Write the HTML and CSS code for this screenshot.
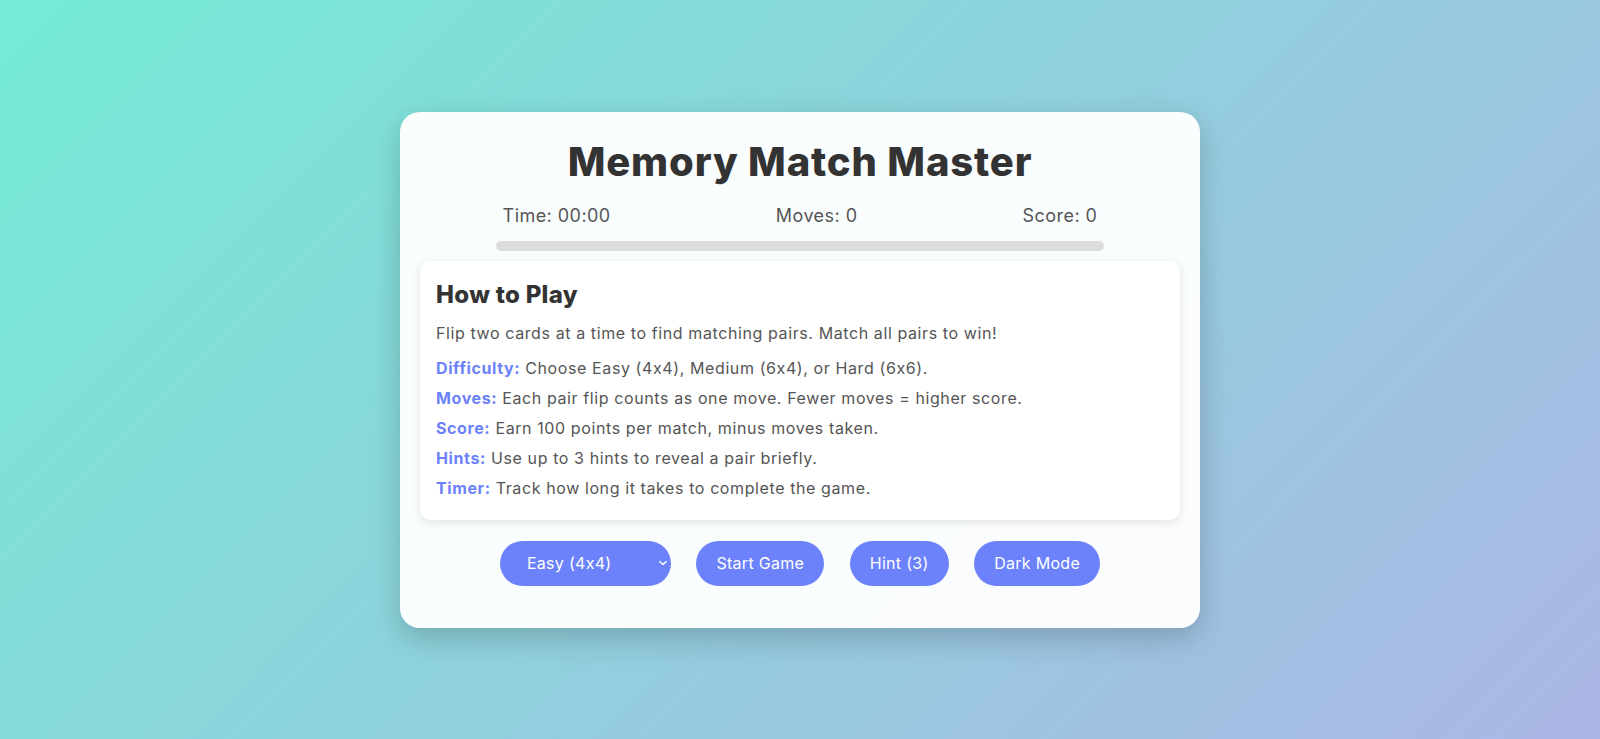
FILE: index.html
```html
<!DOCTYPE html>
<html lang="en">
<head>
<meta charset="utf-8">
<title>Memory Match Master</title>
<link rel="stylesheet" href="styles.css">
</head>
<body>
<main class="game">
  <h1 class="title">Memory Match Master</h1>
  <div class="stats">
    <span>Time: 00:00</span>
    <span>Moves: 0</span>
    <span>Score: 0</span>
  </div>
  <div class="progress"><div class="progress-fill"></div></div>
  <section class="rules">
    <h2>How to Play</h2>
    <p>Flip two cards at a time to find matching pairs. Match all pairs to win!</p>
    <ul>
      <li><strong>Difficulty:</strong> Choose Easy (4x4), Medium (6x4), or Hard (6x6).</li>
      <li><strong>Moves:</strong> Each pair flip counts as one move. Fewer moves = higher score.</li>
      <li><strong>Score:</strong> Earn 100 points per match, minus moves taken.</li>
      <li><strong>Hints:</strong> Use up to 3 hints to reveal a pair briefly.</li>
      <li><strong>Timer:</strong> Track how long it takes to complete the game.</li>
    </ul>
  </section>
  <div class="controls">
    <div class="select">
      <span>Easy (4x4)</span>
      <svg class="chev" viewBox="0 0 10 6" width="8" height="6"><path d="M1 1l4 4 4-4" fill="none" stroke="#fff" stroke-width="1.7" stroke-linecap="round" stroke-linejoin="round"/></svg>
    </div>
    <button class="btn">Start Game</button>
    <button class="btn">Hint (3)</button>
    <button class="btn">Dark Mode</button>
  </div>
</main>
</body>
</html>
```

FILE: styles.css
```css
* { box-sizing: border-box; }
body {
  margin: 0;
  min-height: 100vh;
  font-family: "Inter", "Noto Sans", sans-serif;
  font-feature-settings: "calt" 0;
  background: linear-gradient(135deg, #74ebd5 0%, #acb6e5 100%);
  display: flex;
  justify-content: center;
  align-items: center;
}
.game {
  width: 800px;
  flex-shrink: 0;
  background: rgba(255, 255, 255, 0.95);
  border-radius: 20px;
  box-shadow: 0 10px 30px rgba(0, 0, 0, 0.2);
  padding: 20px 20px 42px;
}
.title {
  margin: 0 0 10px;
  font-size: 40px;
  line-height: 60px;
  font-weight: 800;
  color: #333;
  text-align: center;
  letter-spacing: 0.85px;
}
.stats {
  display: flex;
  justify-content: space-around;
  font-size: 18px;
  line-height: 28px;
  letter-spacing: 0.45px;
  color: #555;
}
.progress {
  width: 80%;
  height: 10px;
  margin: 11px auto 10px;
  background: #ddd;
  border-radius: 5px;
  overflow: hidden;
}
.progress-fill { width: 0; height: 100%; background: #6b82fb; }
.rules {
  background: #fff;
  border-radius: 10px;
  box-shadow: 0 2px 10px rgba(0, 0, 0, 0.1);
  padding: 16px 16px 20px;
  color: #555;
  font-size: 16px;
  letter-spacing: 0.6px;
}
.rules h2 {
  margin: 0 0 8px;
  font-size: 24px;
  line-height: 36px;
  color: #333;
  font-weight: 800;
  letter-spacing: 0.3px;
}
.rules p { margin: 0 0 11px; line-height: 24px; }
.rules ul { list-style: none; margin: 0; padding: 0; }
.rules li { line-height: 24px; margin-bottom: 6px; }
.rules li:last-child { margin-bottom: 0; }
.rules strong { color: #6b82fb; font-weight: 700; }
.controls {
  display: flex;
  justify-content: center;
  gap: 25.5px;
  margin-top: 21px;
}
.select, .btn {
  height: 45px;
  border-radius: 25px;
  background: #6b82fb;
  color: #fff;
  font-family: inherit;
  font-size: 16px;
  letter-spacing: 0.3px;
  border: none;
  display: flex;
  align-items: center;
}
.select {
  width: 171px;
  padding: 0 4px 0 27px;
  justify-content: space-between;
}
.btn { padding: 0 20px; }
.chev { display: block; }
```
